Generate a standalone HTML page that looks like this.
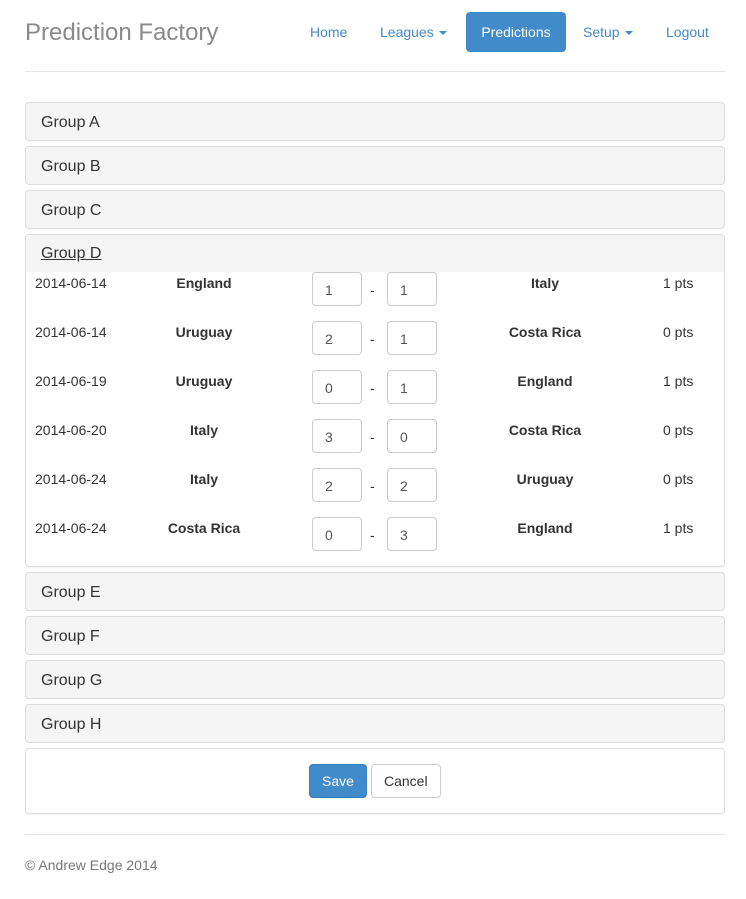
<!DOCTYPE html>
<html><head><meta charset="utf-8"><style>
*{box-sizing:border-box}
body{margin:0;background:#fff;font-family:"Liberation Sans",Arial,sans-serif;font-size:14px;color:#333;width:746px;height:899px;position:relative;overflow:hidden}
.a{position:absolute}
.brand{left:25px;top:18px;font-size:24px;color:#8a8a8a;line-height:30px}
.nav{top:12px;height:40px;line-height:40px;color:#428bca;font-size:14px;padding:0 15px}
.caret{display:inline-block;width:0;height:0;border-left:4px solid transparent;border-right:4px solid transparent;border-top:4px solid #428bca;vertical-align:middle;margin-left:5px}
.hr{left:25px;width:700px;height:1px;background:#e5e5e5}
.ph{left:25px;width:700px;height:39px;background:#f5f5f5;border:1px solid #ddd;border-radius:4px;font-size:16px;line-height:39px;padding-left:15px;color:#333}
.cell{font-size:14px;line-height:20px}
.b{font-weight:bold;text-align:center;width:160px}
.in{width:50px;height:34px;border:1px solid #ccc;border-radius:4px;padding-left:12px;line-height:34px;color:#555;background:#fff}
.btn{height:34px;line-height:33px;border-radius:4px;font-size:14px;padding:0 12px;border:1px solid}
</style></head><body>
<div class="a brand">Prediction Factory</div>
<div class="a nav" style="left:295px">Home</div>
<div class="a nav" style="left:365px">Leagues<span class="caret"></span></div>
<div class="a nav" style="left:466px;width:100px;background:#428bca;color:#fff;border-radius:4px;text-align:center;padding:0">Predictions</div>
<div class="a nav" style="left:568px">Setup<span class="caret"></span></div>
<div class="a nav" style="left:651px">Logout</div>
<div class="a hr" style="top:71px"></div>

<div class="a ph" style="top:102px">Group A</div>
<div class="a ph" style="top:146px">Group B</div>
<div class="a ph" style="top:190px">Group C</div>
<div class="a" style="left:25px;top:234px;width:700px;height:333px;border:1px solid #ddd;border-radius:4px;box-shadow:0 1px 1px rgba(0,0,0,.05)"></div>
<div class="a" style="left:26px;top:235px;width:698px;height:37px;background:#f5f5f5;border-radius:3px 3px 0 0;font-size:16px;line-height:38px;padding-left:15px"><span style="text-decoration:underline">Group D</span></div>

<div class="a cell" style="left:35px;top:273px">2014-06-14</div><div class="a cell b" style="left:124px;top:273px">England</div><div class="a in" style="left:312px;top:272px">1</div><div class="a cell" style="left:370px;top:280px">-</div><div class="a in" style="left:387px;top:272px">1</div><div class="a cell b" style="left:465px;top:273px">Italy</div><div class="a cell" style="left:663px;top:273px">1 pts</div>
<div class="a cell" style="left:35px;top:322px">2014-06-14</div><div class="a cell b" style="left:124px;top:322px">Uruguay</div><div class="a in" style="left:312px;top:321px">2</div><div class="a cell" style="left:370px;top:329px">-</div><div class="a in" style="left:387px;top:321px">1</div><div class="a cell b" style="left:465px;top:322px">Costa Rica</div><div class="a cell" style="left:663px;top:322px">0 pts</div>
<div class="a cell" style="left:35px;top:371px">2014-06-19</div><div class="a cell b" style="left:124px;top:371px">Uruguay</div><div class="a in" style="left:312px;top:370px">0</div><div class="a cell" style="left:370px;top:378px">-</div><div class="a in" style="left:387px;top:370px">1</div><div class="a cell b" style="left:465px;top:371px">England</div><div class="a cell" style="left:663px;top:371px">1 pts</div>
<div class="a cell" style="left:35px;top:420px">2014-06-20</div><div class="a cell b" style="left:124px;top:420px">Italy</div><div class="a in" style="left:312px;top:419px">3</div><div class="a cell" style="left:370px;top:427px">-</div><div class="a in" style="left:387px;top:419px">0</div><div class="a cell b" style="left:465px;top:420px">Costa Rica</div><div class="a cell" style="left:663px;top:420px">0 pts</div>
<div class="a cell" style="left:35px;top:469px">2014-06-24</div><div class="a cell b" style="left:124px;top:469px">Italy</div><div class="a in" style="left:312px;top:468px">2</div><div class="a cell" style="left:370px;top:476px">-</div><div class="a in" style="left:387px;top:468px">2</div><div class="a cell b" style="left:465px;top:469px">Uruguay</div><div class="a cell" style="left:663px;top:469px">0 pts</div>
<div class="a cell" style="left:35px;top:518px">2014-06-24</div><div class="a cell b" style="left:124px;top:518px">Costa Rica</div><div class="a in" style="left:312px;top:517px">0</div><div class="a cell" style="left:370px;top:525px">-</div><div class="a in" style="left:387px;top:517px">3</div><div class="a cell b" style="left:465px;top:518px">England</div><div class="a cell" style="left:663px;top:518px">1 pts</div>

<div class="a ph" style="top:572px">Group E</div>
<div class="a ph" style="top:616px">Group F</div>
<div class="a ph" style="top:660px">Group G</div>
<div class="a ph" style="top:704px">Group H</div>
<div class="a" style="left:25px;top:748px;width:700px;height:66px;border:1px solid #ddd;border-radius:4px;box-shadow:0 1px 1px rgba(0,0,0,.05)"></div>
<div class="a btn" style="left:309px;top:764px;width:58px;background:#428bca;border-color:#357ebd;color:#fff">Save</div>
<div class="a btn" style="left:371px;top:764px;width:70px;background:#fff;border-color:#ccc;color:#333">Cancel</div>
<div class="a hr" style="top:834px"></div>
<div class="a" style="left:25px;top:857px;color:#777;line-height:16px">© Andrew Edge 2014</div>
</body></html>
